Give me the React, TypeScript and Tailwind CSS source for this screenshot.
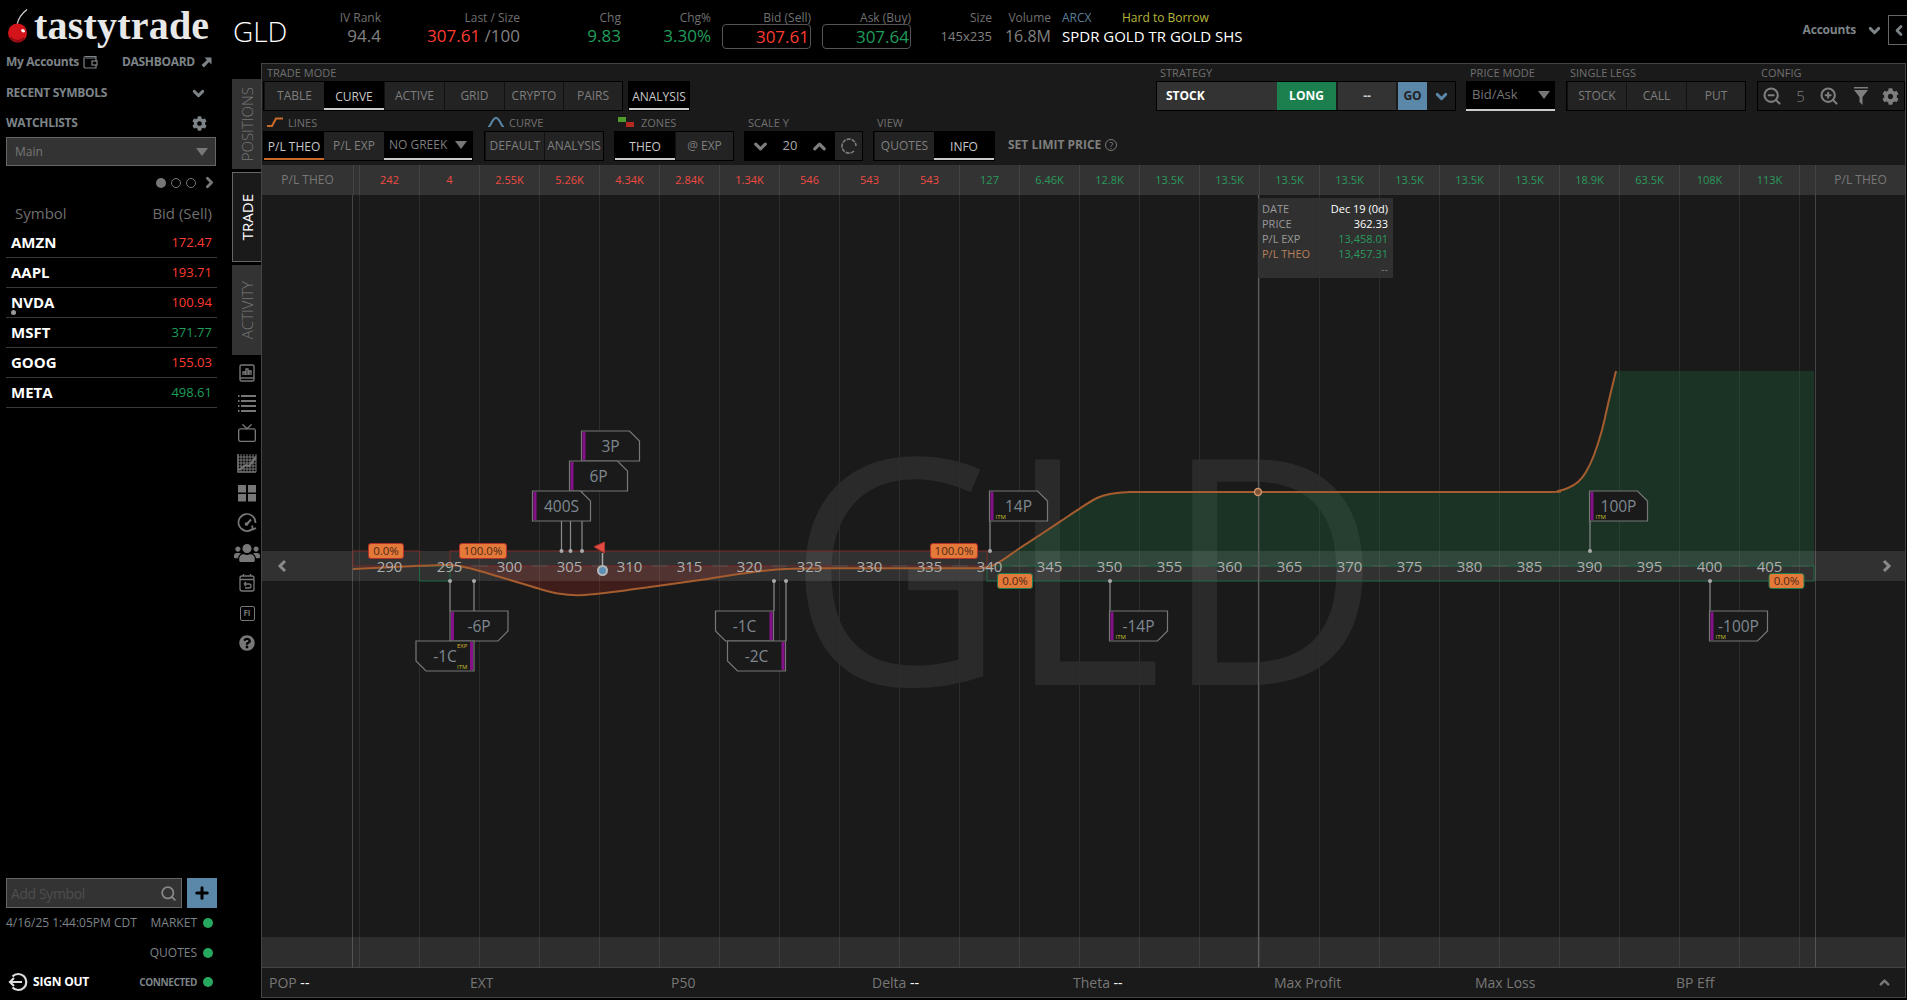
import { ChevronDown, ChevronLeft, ChevronRight, ChevronUp, ZoomIn, ZoomOut, Search, Plus, Tv } from 'lucide-react';
import { FaCog, FaUsers, FaQuestionCircle } from 'react-icons/fa';

type Cell = { label: string; w: number; active?: boolean; underline?: string };

const symbols = [
  { s: 'AMZN', p: '172.47', up: false },
  { s: 'AAPL', p: '193.71', up: false },
  { s: 'NVDA', p: '100.94', up: false },
  { s: 'MSFT', p: '371.77', up: true },
  { s: 'GOOG', p: '155.03', up: false },
  { s: 'META', p: '498.61', up: true },
];

const plValues = ['242', '4', '2.55K', '5.26K', '4.34K', '2.84K', '1.34K', '546', '543', '543', '127', '6.46K', '12.8K', '13.5K', '13.5K', '13.5K', '13.5K', '13.5K', '13.5K', '13.5K', '18.9K', '63.5K', '108K', '113K'];
const redCount = 10;

const strikes = Array.from({ length: 24 }, (_, i) => 290 + i * 5);
const strikeX = (i: number) => 389.5 + i * 60;

// curve points in page coordinates, the svg viewBox uses the same ones
const curve: [number, number][] = [
  [353, 569], [385, 567.5], [419, 565.8], [449, 565], [463, 566.7], [480, 571], [500, 577], [520, 583], [540, 589], [558, 593.5], [577, 595.3], [600, 593.5], [625, 590.5], [650, 587], [700, 580], [750, 572.5], [785, 569], [840, 568.3], [900, 568.3], [960, 568.3], [977, 568.2], [990, 566.7], [1000, 561.7], [1020, 548], [1040, 535], [1060, 521.7], [1080, 508.3], [1097, 498], [1110, 494], [1127, 492.2], [1145, 492], [1258, 492], [1400, 492], [1545, 492], [1558, 491], [1568, 488], [1578, 482], [1586, 472], [1594, 455], [1602, 430], [1609, 400], [1616, 371],
];

const smooth = (p: [number, number][]) => {
  let d = `M${p[0][0]} ${p[0][1]}`;
  for (let i = 0; i < p.length - 1; i++) {
    const a = p[Math.max(i - 1, 0)];
    const b = p[i];
    const c = p[i + 1];
    const e = p[Math.min(i + 2, p.length - 1)];
    d += ` C${b[0] + (c[0] - a[0]) / 6} ${b[1] + (c[1] - a[1]) / 6} ${c[0] - (e[0] - b[0]) / 6} ${c[1] - (e[1] - b[1]) / 6} ${c[0]} ${c[1]}`;
  }
  return d;
};

const lossPts = curve.filter(([x]) => x >= 463 && x <= 785);
const winPts = curve.filter(([x]) => x >= 1000);

type TagProps = {
  x: number;
  y: number;
  label: string;
  cut: 'tr' | 'br' | 'bl';
  bar: 'l' | 'r';
  itm?: boolean;
  exp?: boolean;
};

const tags: TagProps[] = [
  { x: 581.5, y: 431, label: '3P', cut: 'tr', bar: 'l' },
  { x: 569.5, y: 461, label: '6P', cut: 'tr', bar: 'l' },
  { x: 532.5, y: 491, label: '400S', cut: 'tr', bar: 'l' },
  { x: 450, y: 611, label: '-6P', cut: 'br', bar: 'l' },
  { x: 416, y: 641, label: '-1C', cut: 'bl', bar: 'r', itm: true, exp: true },
  { x: 715.5, y: 611, label: '-1C', cut: 'bl', bar: 'r' },
  { x: 727.5, y: 641, label: '-2C', cut: 'bl', bar: 'r' },
  { x: 989.5, y: 491, label: '14P', cut: 'tr', bar: 'l', itm: true },
  { x: 1109.5, y: 611, label: '-14P', cut: 'br', bar: 'l', itm: true },
  { x: 1589.5, y: 491, label: '100P', cut: 'tr', bar: 'l', itm: true },
  { x: 1709.5, y: 611, label: '-100P', cut: 'br', bar: 'l', itm: true },
];

// leg connectors: x, from y, to y, dot y
const wires: [number, number, number, number][] = [
  [561.5, 521, 551, 551], [570.5, 491, 551, 551], [582, 461, 551, 551],
  [450, 581, 611, 581], [474, 581, 641, 581],
  [774, 581, 611, 581], [786, 581, 641, 581],
  [990, 521, 551, 551], [1110, 581, 611, 581],
  [1590, 521, 551, 551], [1710, 581, 611, 581],
];

const badges: { x: number; y: number; w: number; label: string; border: string }[] = [
  { x: 368.5, y: 543.5, w: 35, label: '0.0%', border: '#b3332b' },
  { x: 459.5, y: 543.5, w: 47, label: '100.0%', border: '#b3332b' },
  { x: 930.5, y: 543.5, w: 47, label: '100.0%', border: '#b3332b' },
  { x: 997.5, y: 573.5, w: 35, label: '0.0%', border: '#1f7a4c' },
  { x: 1769, y: 573.5, w: 35, label: '0.0%', border: '#1f7a4c' },
];

const Tag = ({ x, y, label, cut, bar, itm, exp }: TagProps) => {
  const w = 58;
  const h = 30;
  const c = 10;
  let pts = `${x},${y} ${x + w},${y} ${x + w},${y + h} ${x},${y + h}`;
  if (cut === 'tr') pts = `${x},${y} ${x + w - c},${y} ${x + w},${y + c} ${x + w},${y + h} ${x},${y + h}`;
  if (cut === 'br') pts = `${x},${y} ${x + w},${y} ${x + w},${y + h - c} ${x + w - c},${y + h} ${x},${y + h}`;
  if (cut === 'bl') pts = `${x},${y} ${x + w},${y} ${x + w},${y + h} ${x + c},${y + h} ${x},${y + h - c}`;
  return (
    <g>
      <polygon points={pts} fill="#1a1a1a" stroke="#777" strokeWidth="1.2" />
      <rect x={bar === 'l' ? x + 1 : x + w - 4} y={y + 1} width="3" height={h - 2} fill="#86108a" />
      <text x={x + w / 2} y={y + 20.5} textAnchor="middle" fontSize="15.5" fill="#7f8890">
        {label}
      </text>
      {itm && (
        <text x={bar === 'l' ? x + 6 : x + w - 17} y={y + 28} fontSize="6" fill="#c4c02c">
          ITM
        </text>
      )}
      {exp && (
        <text x={x + w - 17} y={y + 7} fontSize="6" fill="#d9b233">
          EXP
        </text>
      )}
    </g>
  );
};

const CurveChart = () => (
  <svg viewBox="262 195 1643 772" className="block h-[772px] w-[1643px]">
    <text x="787" y="685" textLength="594" lengthAdjust="spacingAndGlyphs" fontSize="316" fontWeight="400" fill="#2a2a2a">
      GLD
    </text>

    {Array.from({ length: 25 }, (_, i) => (
      <line key={i} x1={359.5 + i * 60} x2={359.5 + i * 60} y1="195" y2="967" stroke="#2c2c2c" />
    ))}
    <line x1="352.5" x2="352.5" y1="195" y2="967" stroke="#444" />
    <line x1="1815.5" x2="1815.5" y1="195" y2="967" stroke="#444" />

    <path d={`${smooth(winPts)} L1814 371 L1814 566 L1000 566 Z`} fill="rgba(30,125,70,0.26)" />
    <path d={`${smooth(lossPts)} L785 566 L463 566 Z`} fill="rgba(190,40,30,0.22)" />

    <rect x="262" y="551" width="1643" height="30" fill="rgba(255,255,255,0.1)" />
    <rect x="262" y="937" width="1643" height="30" fill="rgba(255,255,255,0.09)" />

    {/* probability zones */}
    <rect x="353" y="551" width="66.5" height="15" fill="none" stroke="#7c2b2b" />
    <rect x="450" y="551" width="537" height="15" fill="none" stroke="#7c2b2b" />
    <rect x="419.5" y="566" width="30.5" height="15" fill="none" stroke="#1f6b44" />
    <rect x="987" y="566" width="827" height="15" fill="none" stroke="#1f6b44" />

    {strikes.map((s, i) => (
      <line key={s} x1={strikeX(i) + 22} x2={strikeX(i) + 38} y1="566" y2="566" stroke="#555" />
    ))}

    <path d={smooth(curve)} fill="none" stroke="#a55c2e" strokeWidth="2" />

    <line x1="1258.5" x2="1258.5" y1="195" y2="967" stroke="#5c5c5c" strokeWidth="1.2" />
    <circle cx="1258" cy="492" r="3.5" fill="#7a5236" stroke="#cf9267" strokeWidth="1.5" />

    {wires.map(([x, a, b, dot], i) => (
      <g key={i}>
        <line x1={x} x2={x} y1={a} y2={b} stroke="#8a8a8a" strokeWidth="1.2" />
        <circle cx={x} cy={dot} r="2" fill="#aaa" />
      </g>
    ))}

    {strikes.map((s, i) => (
      <text key={s} x={strikeX(i)} y="572" textAnchor="middle" fontSize="15" fill="#aeaeae">
        {s}
      </text>
    ))}

    {tags.map((t) => (
      <Tag key={`${t.label}-${t.x}`} {...t} />
    ))}

    {badges.map((b) => (
      <g key={b.x}>
        <rect x={b.x} y={b.y} width={b.w} height="15" rx="2.5" fill="#e5793a" stroke={b.border} />
        <text x={b.x + b.w / 2} y={b.y + 11.5} textAnchor="middle" fontSize="11.5" fill="#4d2a16">
          {b.label}
        </text>
      </g>
    ))}

    {/* underlying price flag */}
    <line x1="602.5" x2="602.5" y1="553" y2="566" stroke="#aaa" strokeWidth="1.5" />
    <polygon points="604.5,542 594,546.7 604.5,553" fill="#e04b42" stroke="#b3332b" />
    <circle cx="602.5" cy="570.5" r="4.5" fill="#5b8fb3" stroke="#b8b8b8" strokeWidth="2" />

    <polyline points="285,561 280,566 285,571" fill="none" stroke="#8a8a8a" strokeWidth="3" />
    <polyline points="1884,561 1889,566 1884,571" fill="none" stroke="#8a8a8a" strokeWidth="3" />
  </svg>
);

const BtnGroup = ({ cells }: { cells: Cell[] }) => (
  <div className="flex h-[30px] border border-black bg-[#232323]">
    {cells.map((c) => (
      <div
        key={c.label}
        style={{ width: c.w, borderBottomColor: c.underline }}
        className={
          c.active
            ? 'flex items-center justify-center border-b-2 bg-black pt-[3px] text-[12px] text-[#c8c8c8]'
            : 'flex items-center justify-center border-l border-[#111] text-[12px] text-[#7e7e7e]'
        }
      >
        {c.label}
      </div>
    ))}
  </div>
);

const Label = ({ children }: { children: React.ReactNode }) => (
  <div className="flex h-[16px] items-center gap-1 pb-[2px] pl-[4px] text-[11px] leading-none text-[#707070]">{children}</div>
);

const Tri = ({ className = 'border-t-[#777]' }: { className?: string }) => (
  <span className={`h-0 w-0 border-x-[6px] border-t-[8px] border-x-transparent ${className}`} />
);

const Quote = ({ w, label, children }: { w: number; label: string; children: React.ReactNode }) => (
  <div style={{ width: w }} className="flex flex-col items-end">
    <span className="text-[12px] leading-[17px] text-[#707070]">{label}</span>
    {children}
  </div>
);

const Cherry = () => (
  <svg width="30" height="36" viewBox="0 0 30 36" className="shrink-0">
    <path d="M15 17 C16 11 19 6 25 1.5" fill="none" stroke="#d8d8d8" strokeWidth="1.2" />
    <circle cx="15.5" cy="25" r="9.5" fill="#d4141b" />
    <path d="M20 21 a3 3 0 0 1 3 3 a3 3 0 0 1 -4 -1.5 z" fill="#fff" />
    <path d="M8 29 a9 9 0 0 0 14 1" fill="none" stroke="#8e0c12" strokeWidth="2" />
  </svg>
);

const Wallet = () => (
  <svg width="15" height="14" viewBox="0 0 15 14" fill="none" stroke="#7d8488" strokeWidth="1.2">
    <path d="M13 3 V1.5 H2.5 A1.5 1.5 0 0 0 1 3 V12 A1.5 1.5 0 0 0 2.5 13 H13 V3 H2.5" />
    <rect x="9" y="6" width="5" height="4" fill="#000" />
  </svg>
);

const StatusDot = () => <span className="h-[10px] w-[10px] rounded-full bg-[#27a85f]" />;

const Sidebar = () => (
  <aside className="flex w-[232px] shrink-0 flex-col bg-black">
    <div className="flex h-[48px] items-start pl-[2px] pt-[8px]">
      <Cherry />
      <span className="ml-[2px] font-['Liberation_Serif',serif] text-[40px] font-bold leading-[36px] tracking-[0.2px] text-[#e8e8e8]">tastytrade</span>
    </div>
    <div className="flex h-[28px] items-center pl-[6px] text-[12px] font-bold tracking-[-0.3px] text-[#7d8488]">
      <span>My Accounts</span>
      <span className="ml-[4px]"><Wallet /></span>
      <span className="ml-[24px]">DASHBOARD</span>
      <svg width="11" height="11" viewBox="0 0 11 11" className="ml-[6px]"><path d="M3.5 0.5 H10.5 V7.5 L8 5 L3 10.5 L0.5 8 L6 3 Z" fill="#7d8488" /></svg>
    </div>
    <div className="mt-[3px] flex h-[28px] items-center justify-between pl-[6px] pr-[25px] text-[12px] font-bold tracking-[-0.3px] text-[#7d8488]">
      RECENT SYMBOLS
      <ChevronDown size={17} strokeWidth={4} />
    </div>
    <div className="flex h-[30px] items-center justify-between pl-[6px] pr-[25px] pt-[2px] text-[12px] font-bold tracking-[-0.3px] text-[#7d8488]">
      WATCHLISTS
      <FaCog size={15} />
    </div>
    <div className="ml-[6px] flex h-[29px] w-[210px] items-center justify-between border border-[#666] bg-[#333] pl-[8px] pr-[7px] text-[12px] text-[#777]">
      Main
      <Tri />
    </div>
    <div className="mt-[8px] flex items-center justify-end gap-[5px] pr-[14px]">
      <span className="h-[10px] w-[10px] rounded-full bg-[#777]" />
      <span className="h-[10px] w-[10px] rounded-full border border-[#777]" />
      <span className="h-[10px] w-[10px] rounded-full border border-[#777]" />
      <ChevronRight size={17} strokeWidth={4} className="text-[#777]" />
    </div>
    <div className="mt-[12px] flex justify-between pl-[15px] pr-[20px] text-[15px] leading-[20px] text-[#6e6e6e]">
      <span>Symbol</span>
      <span>Bid (Sell)</span>
    </div>
    <div className="ml-[6px] mt-[5px] w-[211px]">
      {symbols.map((r) => (
        <div key={r.s} className="relative flex h-[30px] items-center justify-between border-b border-[#3a3a3a] pl-[5px] pr-[5px]">
          <span className="text-[15px] font-bold text-white">{r.s}</span>
          <span className={r.up ? 'text-[13px] text-[#1f9d5b]' : 'text-[13px] text-[#ff3b30]'}>{r.p}</span>
          {r.s === 'NVDA' && <span className="absolute bottom-[2px] left-[5px] h-[5px] w-[5px] rounded-full bg-[#999]" />}
        </div>
      ))}
    </div>
    <div className="mt-auto flex gap-[5px] pl-[6px]">
      <div className="flex h-[30px] w-[176px] items-center justify-between border border-[#666] bg-[#333] pl-[4px] pr-[4px] text-[14px] tracking-[-0.4px] text-[#4e4e4e]">
        Add Symbol
        <Search size={17} strokeWidth={2.5} className="text-[#888]" />
      </div>
      <div className="flex h-[30px] w-[30px] items-center justify-center bg-[#5b88a8]">
        <Plus size={18} strokeWidth={4} className="text-black" />
      </div>
    </div>
    <div className="mt-[7px] flex h-[16px] items-center justify-between pl-[6px] pr-[19px] text-[12px] text-[#7d8488]">
      <span>4/16/25 1:44:05PM CDT</span>
      <span className="flex items-center gap-[6px]">MARKET <StatusDot /></span>
    </div>
    <div className="mt-[14px] flex h-[16px] items-center justify-end gap-[6px] pr-[19px] text-[12px] text-[#7d8488]">
      QUOTES <StatusDot />
    </div>
    <div className="mb-[10px] mt-[13px] flex h-[16px] items-center justify-between pl-[8px] pr-[19px]">
      <span className="flex items-center gap-[5px] text-[12px] font-bold tracking-[-0.2px] text-white">
        <svg width="20" height="20" viewBox="0 0 20 20" fill="none" stroke="#ddd" strokeWidth="2.2">
          <path d="M4.5 4.5 A8 8 0 1 1 4.5 15.5" />
          <path d="M14 10 H2 M6 6 L2 10 L6 14" />
        </svg>
        SIGN OUT
      </span>
      <span className="flex items-center gap-[6px] text-[10px] font-bold tracking-[-0.4px] text-[#7d8488]">CONNECTED <StatusDot /></span>
    </div>
  </aside>
);

const railIcons = [
  <svg key="a" viewBox="0 0 20 20" className="h-[20px] w-[20px]" fill="none" stroke="#777" strokeWidth="1.4"><rect x="3" y="2" width="14" height="16" rx="1.5" /><path d="M3 15 H17" /><path d="M6 12 V9 H8 V12 M9 12 V6 H11 V12 M12 12 V8 H14 V12" /></svg>,
  <svg key="b" viewBox="0 0 20 20" className="h-[20px] w-[20px]" fill="none" stroke="#777" strokeWidth="2"><path d="M1 3 H2.5 M4 3 H19 M1 8 H2.5 M4 8 H19 M1 13 H2.5 M4 13 H19 M1 18 H2.5 M4 18 H19" /></svg>,
  <Tv key="c" size={20} strokeWidth={1.6} className="text-[#777]" />,
  <svg key="d" viewBox="0 0 20 20" className="h-[20px] w-[20px]" fill="none" stroke="#777" strokeWidth="1"><path d="M1 1 V19 H19" strokeWidth="1.6" /><path d="M4 1 V19 M7 1 V19 M10 1 V19 M13 1 V19 M16 1 V19 M19 1 V19 M1 4 H19 M1 7 H19 M1 10 H19 M1 13 H19 M1 16 H19" /><path d="M2 17 L9 12 L12 13 L19 4" strokeWidth="2" /></svg>,
  <svg key="e" viewBox="0 0 20 20" className="h-[20px] w-[20px]" fill="#777"><rect x="1" y="2" width="8" height="7.5" /><rect x="11" y="2" width="8" height="7.5" /><rect x="1" y="11" width="8" height="7.5" /><rect x="11" y="11" width="8" height="7.5" /></svg>,
  <svg key="f" viewBox="0 0 20 20" className="h-[20px] w-[20px]" fill="none" stroke="#777" strokeWidth="1.7"><path d="M15.5 16 A8.5 8.5 0 1 1 18.5 10" /><path d="M15 12.5 L16 16.5 L19 15" /><path d="M10 11 L14 6.5" strokeWidth="2" /><circle cx="9.5" cy="11" r="1" fill="#777" /></svg>,
  <FaUsers key="g" size={26} className="text-[#777]" />,
  <svg key="h" viewBox="0 0 20 20" className="h-[20px] w-[20px]" fill="none" stroke="#777" strokeWidth="1.3"><rect x="3" y="3" width="14" height="15" rx="2" /><path d="M3 6.5 H17 M6.5 1 V3 M13.5 1 V3" /><path d="M7 11 H12 A2 2 0 0 1 12 15 H8 M7 11 L9 9 M7 11 L9 13" /></svg>,
  <div key="i" className="flex h-[15px] w-[15px] items-center justify-center rounded-[2px] border border-[#777] text-[8px] font-bold leading-none text-[#777]">FI</div>,
  <FaQuestionCircle key="j" size={16} className="text-[#777]" />,
];

const Rail = () => (
  <div className="flex w-[30px] shrink-0 flex-col pt-[15px]">
    <div className="flex h-[90px] items-center justify-center bg-[#333]">
      <span className="rotate-180 text-[15px] font-light text-[#777] [writing-mode:vertical-rl]">POSITIONS</span>
    </div>
    <div className="mt-[3px] flex h-[90px] items-center justify-center border-y border-l border-[#666] bg-[#1a1a1a]">
      <span className="rotate-180 text-[15px] text-white [writing-mode:vertical-rl]">TRADE</span>
    </div>
    <div className="mt-[3px] flex h-[90px] items-center justify-center bg-[#333]">
      <span className="rotate-180 text-[15px] font-light text-[#777] [writing-mode:vertical-rl]">ACTIVITY</span>
    </div>
    <div className="mt-[3px] flex flex-col items-center">
      {railIcons.map((icon, i) => (
        <div key={i} className="flex h-[30px] w-[30px] items-center justify-center">{icon}</div>
      ))}
    </div>
  </div>
);

const Toolbar = () => (
  <div className="h-[101px] pl-[1px] pt-[1px]">
    <div className="flex">
      <div>
        <Label>TRADE MODE</Label>
        <BtnGroup
          cells={[
            { label: 'TABLE', w: 60 },
            { label: 'CURVE', w: 60, active: true, underline: '#ccc' },
            { label: 'ACTIVE', w: 60 },
            { label: 'GRID', w: 60 },
            { label: 'CRYPTO', w: 59 },
            { label: 'PAIRS', w: 59 },
          ]}
        />
      </div>
      <div className="ml-[5px] pt-[16px]">
        <BtnGroup cells={[{ label: 'ANALYSIS', w: 60, active: true, underline: '#ccc' }]} />
      </div>
      <div className="ml-[466px]">
        <Label>STRATEGY</Label>
        <div className="flex h-[30px] w-[300px] border border-black text-[12px] font-bold">
          <span className="flex w-[120px] items-center bg-[#333] pl-[9px] text-white">STOCK</span>
          <span className="flex w-[59px] items-center justify-center bg-[#1b7f4e] text-white">LONG</span>
          <span className="ml-[2px] flex w-[58px] items-center justify-center bg-[#333] text-[#ccc]">--</span>
          <span className="ml-[2px] flex w-[29px] items-center justify-center bg-[#5b88a8] text-[#222]">GO</span>
          <span className="flex flex-1 items-center justify-center"><ChevronDown size={17} strokeWidth={4} className="text-[#5b88a8]" /></span>
        </div>
      </div>
      <div className="ml-[10px]">
        <Label>PRICE MODE</Label>
        <div className="flex h-[30px] w-[89px] items-center justify-between border-b-2 border-[#ccc] bg-black pl-[6px] pr-[5px] text-[13px] text-[#777]">
          Bid/Ask
          <Tri />
        </div>
      </div>
      <div className="ml-[11px]">
        <Label>SINGLE LEGS</Label>
        <BtnGroup cells={[{ label: 'STOCK', w: 59 }, { label: 'CALL', w: 60 }, { label: 'PUT', w: 59 }]} />
      </div>
      <div className="ml-[11px]">
        <Label>CONFIG</Label>
        <div className="flex h-[30px] w-[148px] items-center justify-between border border-black pl-[4px] pr-[5px] text-[#7e7e7e]">
          <ZoomOut size={20} strokeWidth={2.5} />
          <span className="text-[15px] font-light">5</span>
          <ZoomIn size={20} strokeWidth={2.5} />
          <svg width="14" height="18" viewBox="0 0 14 18" fill="#7e7e7e"><rect x="0" y="0" width="14" height="1.5" /><path d="M0 3 H14 L8.5 10 V18 L5.5 15 V10 Z" /></svg>
          <FaCog size={17} />
        </div>
      </div>
    </div>
    <div className="mt-[4px] flex">
      <div>
        <Label>
          <svg width="16" height="10" viewBox="0 0 16 10" className="mr-[1px]" fill="none" stroke="#c96a2a" strokeWidth="2"><path d="M0 9 H5 L9 1.5 H16" /></svg>
          LINES
        </Label>
        <div className="flex h-[30px] w-[210px] border border-black bg-black">
          <div className="flex w-[60px] items-center justify-center border-b-2 border-[#c96a2a] pt-[3px] text-[12px] text-[#c8c8c8]">P/L THEO</div>
          <div className="flex w-[60px] items-center justify-center bg-[#232323] text-[12px] text-[#7e7e7e]">P/L EXP</div>
          <div className="flex flex-1 items-center justify-between border-b-2 border-[#ccc] pl-[5px] pr-[5px] text-[12px] text-[#7e7e7e]">
            NO GREEK
            <Tri />
          </div>
        </div>
      </div>
      <div className="ml-[11px]">
        <Label>
          <svg width="16" height="10" viewBox="0 0 16 10" className="mr-[1px]" fill="none" stroke="#5b88a8" strokeWidth="2"><path d="M0 10 C3 10 4 1 8 1 C12 1 13 10 16 10" /></svg>
          CURVE
        </Label>
        <BtnGroup cells={[{ label: 'DEFAULT', w: 59 }, { label: 'ANALYSIS', w: 59 }]} />
      </div>
      <div className="ml-[10px]">
        <Label>
          <svg width="18" height="10" viewBox="0 0 18 10" className="mr-[1px]"><rect x="0" y="0" width="8" height="5" fill="#4f9a2a" /><rect x="8" y="5" width="8" height="5" fill="#b3281f" /></svg>
          ZONES
        </Label>
        <BtnGroup cells={[{ label: 'THEO', w: 60, active: true, underline: '#ccc' }, { label: '@ EXP', w: 58 }]} />
      </div>
      <div className="ml-[10px]">
        <Label>SCALE Y</Label>
        <div className="flex h-[30px] w-[119px] border border-black bg-black text-[#7e7e7e]">
          <div className="flex w-[90px] items-center justify-between px-[6px] text-[13px]">
            <ChevronDown size={19} strokeWidth={4} />
            <span className="text-[#aaa]">20</span>
            <ChevronUp size={19} strokeWidth={4} />
          </div>
          <div className="flex flex-1 items-center justify-center bg-[#232323]">
            <svg width="16" height="16" viewBox="0 0 16 16" fill="none" stroke="#7e7e7e" strokeWidth="1.6" strokeDasharray="4 1"><path d="M13 13 A7 7 0 1 1 15 8" /></svg>
          </div>
        </div>
      </div>
      <div className="ml-[10px]">
        <Label>VIEW</Label>
        <BtnGroup cells={[{ label: 'QUOTES', w: 60 }, { label: 'INFO', w: 60, active: true, underline: '#ccc' }]} />
      </div>
      <div className="ml-[13px] flex items-center gap-[4px] pt-[14px] text-[12px] font-bold text-[#7e7e7e]">
        SET LIMIT PRICE
        <span className="flex h-[12px] w-[12px] items-center justify-center rounded-full border border-[#777] text-[9px] font-normal leading-none">?</span>
      </div>
    </div>
  </div>
);

const PlStrip = () => (
  <div className="flex h-[30px] bg-[#333] text-[11px]">
    <div className="flex w-[91px] items-center justify-center text-[12px] text-[#777]">P/L THEO</div>
    <div className="w-[6px] border-l border-[#444]" />
    {plValues.map((v, i) => (
      <div key={i} className={`flex w-[60px] items-center justify-center border-l border-[#444] ${i < redCount ? 'text-[#f04a42]' : 'text-[#2a9a5c]'}`}>
        {v}
      </div>
    ))}
    <div className="w-[16px] border-l border-[#444]" />
    <div className="flex w-[90px] items-center justify-center border-l border-[#444] text-[12px] text-[#777]">P/L THEO</div>
  </div>
);

const infoRows = [
  { k: 'DATE', v: 'Dec 19 (0d)', kc: 'text-[#999]', vc: 'text-white' },
  { k: 'PRICE', v: '362.33', kc: 'text-[#999]', vc: 'text-white' },
  { k: 'P/L EXP', v: '13,458.01', kc: 'text-[#999]', vc: 'text-[#2a9a5c]' },
  { k: 'P/L THEO', v: '13,457.31', kc: 'text-[#b9805c]', vc: 'text-[#2a9a5c]' },
  { k: '', v: '--', kc: 'text-[#999]', vc: 'text-[#777]' },
];

const bottomStats: [string, boolean][] = [['POP', true], ['EXT', false], ['P50', false], ['Delta', true], ['Theta', true], ['Max Profit', false], ['Max Loss', false], ['BP Eff', false]];

const App = () => (
  <div className="flex h-[1000px] w-[1907px] overflow-hidden bg-black font-['Open_Sans',sans-serif]">
    <Sidebar />
    <div className="flex min-w-0 flex-1 flex-col">
      <header className="flex h-[64px] shrink-0 items-start pt-[9px]">
        <span className="ml-px w-[60px] text-[28px] font-light leading-[44px] text-white">GLD</span>
        <Quote w={88} label="IV Rank"><span className="text-[17px] leading-[20px] text-[#808080]">94.4</span></Quote>
        <Quote w={139} label="Last / Size">
          <span className="text-[17px] leading-[20px] text-[#808080]"><span className="text-[#ff3b30]">307.61</span> /100</span>
        </Quote>
        <Quote w={101} label="Chg"><span className="text-[17px] leading-[20px] text-[#1f9d5b]">9.83</span></Quote>
        <Quote w={90} label="Chg%"><span className="text-[17px] leading-[20px] text-[#1f9d5b]">3.30%</span></Quote>
        <Quote w={100} label="Bid (Sell)">
          <span className="-mt-[2px] flex h-[25px] w-[89px] items-center justify-end rounded-[4px] border border-[#555] pr-[1px] text-[17px] text-[#ff3b30]">307.61</span>
        </Quote>
        <Quote w={100} label="Ask (Buy)">
          <span className="-mt-[2px] flex h-[25px] w-[89px] items-center justify-end rounded-[4px] border border-[#555] pr-[1px] text-[17px] text-[#1f9d5b]">307.64</span>
        </Quote>
        <Quote w={81} label="Size"><span className="text-[13px] leading-[20px] text-[#808080]">145x235</span></Quote>
        <Quote w={59} label="Volume"><span className="text-[16px] leading-[20px] text-[#808080]">16.8M</span></Quote>
        <div className="ml-[11px] flex flex-col">
          <div className="flex text-[12px] leading-[17px]">
            <span className="w-[60px] text-[#5b7f99]">ARCX</span>
            <span className="text-[#b8b83a]">Hard to Borrow</span>
          </div>
          <span className="text-[15px] leading-[20px] text-white">SPDR GOLD TR GOLD SHS</span>
        </div>
        <div className="ml-auto mt-[5px] flex h-[30px] items-center gap-[10px] self-start pt-[2px] text-[12px] font-bold tracking-[-0.2px] text-[#7d8488]">
          Accounts
          <ChevronDown size={17} strokeWidth={4} />
          <span className="-ml-[5px] flex h-[30px] w-[19px] items-center justify-start border border-r-0 border-[#666] pl-[2px]">
            <ChevronLeft size={17} strokeWidth={4} />
          </span>
        </div>
      </header>
      <div className="flex min-h-0 flex-1">
        <Rail />
        <main className="relative mb-[3px] mr-[2px] flex min-w-0 flex-1 flex-col bg-[#1a1a1a] outline outline-1 outline-[#444]">
          <Toolbar />
          <PlStrip />
          <div className="relative flex-1">
            <CurveChart />
            <div className="absolute left-[996px] top-[3px] flex h-[80px] w-[135px] flex-col bg-[#333]/90 pl-[4px] pr-[5px] pt-[4px] text-[11px]">
              {infoRows.map((r) => (
                <div key={r.k + r.v} className="flex h-[15px] items-center justify-between">
                  <span className={r.kc}>{r.k}</span>
                  <span className={r.vc}>{r.v}</span>
                </div>
              ))}
            </div>
          </div>
          <div className="relative flex h-[30px] items-center border-t border-[#444] pl-[7px] text-[14px] text-[#777]">
            {bottomStats.map(([name, dash]) => (
              <span key={name} className="w-[201px]">
                {name}
                {dash && <span className="text-white"> --</span>}
              </span>
            ))}
            <ChevronUp size={15} strokeWidth={4} className="absolute right-[13px] text-[#777]" />
          </div>
        </main>
      </div>
    </div>
  </div>
);

export default App;
